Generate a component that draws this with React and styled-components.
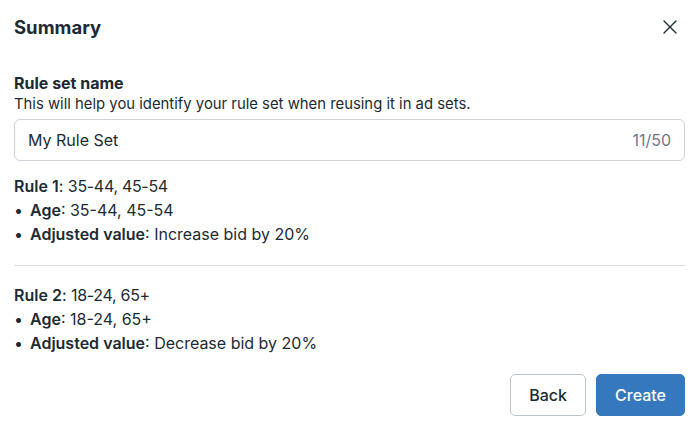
import styled, { createGlobalStyle } from 'styled-components';

const GlobalStyle = createGlobalStyle`
   html, body {
      margin: 0;
      padding: 0;
      background: #ffffff;
   }
   body {
      font-family: Inter, "Helvetica Neue", "Liberation Sans", sans-serif;
      color: #1c2b33;
      -webkit-font-smoothing: antialiased;
   }
`;

const rules = [
   { name: 'Rule 1', ages: '35-44, 45-54', adjust: 'Increase bid by 20%' },
   { name: 'Rule 2', ages: '18-24, 65+', adjust: 'Decrease bid by 20%' },
];

const CloseIcon = () => (
   <svg width="16" height="16" viewBox="0 0 16 16" fill="none">
      <path d="M2 2 L14 14 M14 2 L2 14" stroke="#1c2b33" strokeWidth="1.4" strokeLinecap="round" />
   </svg>
);

const App = () => {
   return (
      <>
         <GlobalStyle />
         <Dialog>
            <Header>
               <Title>Summary</Title>
               <CloseButton aria-label="Close"><CloseIcon /></CloseButton>
            </Header>

            <Field>
               <Label>Rule set name</Label>
               <Hint>This will help you identify your rule set when reusing it in ad sets.</Hint>
               <InputBox>
                  <Input defaultValue="My Rule Set" />
                  <Counter>11/50</Counter>
               </InputBox>
            </Field>

            {rules.map((rule, i) => (
               <RuleBlock key={rule.name} $first={i === 0}>
                  <Line><b>{rule.name}</b>: <Value>{rule.ages}</Value></Line>
                  <Bullet><b>Age</b>: {rule.ages}</Bullet>
                  <Bullet><b>Adjusted value</b>: {rule.adjust}</Bullet>
               </RuleBlock>
            ))}

            <Footer>
               <Button>Back</Button>
               <Button $primary>Create</Button>
            </Footer>
         </Dialog>
      </>
   );
};
export default App;


const Dialog = styled.div`
   width: 700px;
   height: 431px;
   box-sizing: border-box;
   padding: 0 15px 0 14px;
   display: flex;
   flex-flow: column nowrap;
`;

const Header = styled.div`
   height: 53px;
   display: flex;
   align-items: center;
   justify-content: space-between;
`;

const Title = styled.h1`
   margin: 0;
   font-size: 18.5px;
   font-weight: 700;
`;

const CloseButton = styled.button`
   border: none;
   background: none;
   padding: 0;
   margin-right: 7px;
   display: flex;
   cursor: pointer;
`;

const Field = styled.div`
   margin-top: 19px;
   display: flex;
   flex-flow: column nowrap;
`;

const Label = styled.div`
   font-size: 16px;
   font-weight: 700;
   line-height: 22px;
`;

const Hint = styled.div`
   font-size: 14.85px;
   line-height: 19px;
   margin-top: 1px;
`;

const InputBox = styled.div`
   margin-top: 5px;
   height: 42px;
   box-sizing: border-box;
   border: 1px solid #ccd2d8;
   border-radius: 6px;
   display: flex;
   align-items: center;
   padding: 0 13px;
`;

const Input = styled.input`
   flex: 1;
   border: none;
   outline: none;
   font: inherit;
   font-size: 16px;
   color: #1c2b33;
   padding: 0;
   background: transparent;
`;

const Counter = styled.span`
   font-size: 16px;
   color: #6c7a88;
`;

const RuleBlock = styled.div`
   margin-top: ${(props) => (props.$first ? '13px' : '0')};
   padding: ${(props) => (props.$first ? '0 0 19px' : '17px 0 0')};
   border-bottom: ${(props) => (props.$first ? '1px solid #dadde1' : 'none')};
   display: flex;
   flex-flow: column nowrap;
`;

const Line = styled.div`
   font-size: 16px;
   line-height: 24px;
   & > b { font-weight: 600; }
`;

const Value = styled.span`
   letter-spacing: -0.3px;
`;

const Bullet = styled(Line)`
   &::before {
      content: '•';
      margin-right: 7px;
   }
`;

const Footer = styled.div`
   margin-top: auto;
   margin-bottom: 15px;
   display: flex;
   justify-content: flex-end;
   gap: 10px;
`;

const Button = styled.button`
   height: 42px;
   padding: 0 18px;
   border-radius: 5px;
   font-family: inherit;
   font-size: 16px;
   font-weight: 500;
   cursor: pointer;
   border: 1px solid ${(props) => (props.$primary ? '#3578bd' : '#bcc4cc')};
   background: ${(props) => (props.$primary ? '#3578bd' : '#ffffff')};
   color: ${(props) => (props.$primary ? '#ffffff' : '#1c2b33')};
`;
